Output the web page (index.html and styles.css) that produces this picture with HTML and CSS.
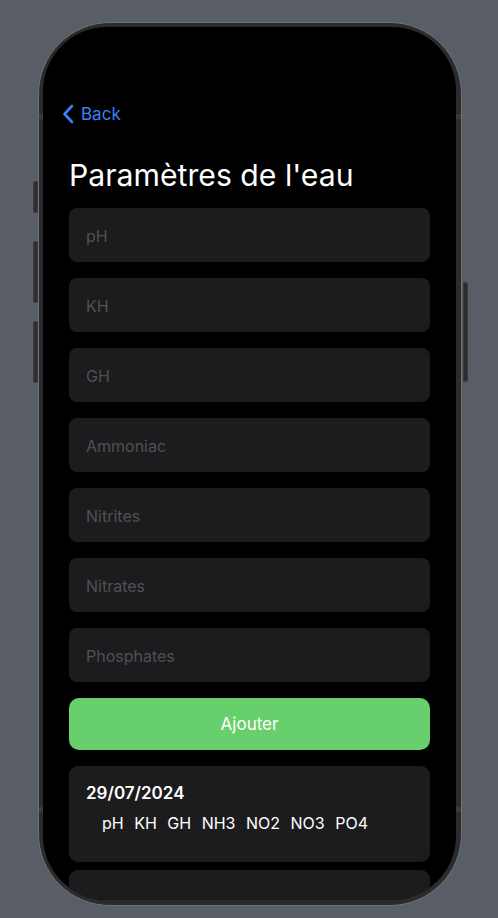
FILE: index.html
```html
<!DOCTYPE html>
<html lang="fr">
<head>
<meta charset="utf-8">
<title>Paramètres de l'eau</title>
<link rel="stylesheet" href="styles.css">
</head>
<body>
<div class="phone">
  <span class="btn btn-action"></span>
  <span class="btn btn-vol-up"></span>
  <span class="btn btn-vol-down"></span>
  <span class="btn btn-power"></span>
  <span class="band band-top-l"></span>
  <span class="band band-top-r"></span>
  <span class="band band-bot-l"></span>
  <span class="band band-bot-r"></span>
  <div class="screen">
    <nav class="nav">
      <a class="back" href="#">
        <svg class="chev" width="12" height="20" viewBox="0 0 12 20"><path d="M10 2 L2.5 10 L10 18" fill="none" stroke="currentColor" stroke-width="2.6" stroke-linecap="round" stroke-linejoin="round"/></svg>
        <span>Back</span>
      </a>
    </nav>
    <h1 class="title">Paramètres de l'eau</h1>
    <form class="form">
      <div class="field">pH</div>
      <div class="field">KH</div>
      <div class="field">GH</div>
      <div class="field">Ammoniac</div>
      <div class="field">Nitrites</div>
      <div class="field">Nitrates</div>
      <div class="field">Phosphates</div>
      <button class="add" type="button">Ajouter</button>
    </form>
    <div class="list">
      <div class="card">
        <div class="date">29/07/2024</div>
        <div class="params">
          <span>pH</span><span>KH</span><span>GH</span><span>NH3</span><span>NO2</span><span>NO3</span><span>PO4</span>
        </div>
      </div>
      <div class="card"></div>
    </div>
  </div>
</div>
</body>
</html>
```
FILE: styles.css
```css
* { box-sizing: border-box; }
html, body { margin: 0; padding: 0; }
body {
  background: #595d65;
  width: 498px;
  height: 918px;
  overflow: hidden;
  font-family: Inter, "Liberation Sans", sans-serif;
  padding: 22px 0 0 38px;
}
.phone {
  position: relative;
  width: 424px;
  height: 884px;
  border-radius: 72px;
  background: #2b2b2d;
  border: 1.5px solid #6f7175;
  padding: 4px 5px 5px 4px;
}
.btn {
  position: absolute;
  width: 5px;
  background: #2e2e30;
  border: 1px solid #3c3c3e;
}
.btn-action { left: -6.5px; top: 158px; height: 32px; border-radius: 2px 0 0 2px; }
.btn-vol-up { left: -6.5px; top: 218px; height: 62px; border-radius: 2px 0 0 2px; }
.btn-vol-down { left: -6.5px; top: 298px; height: 62px; border-radius: 2px 0 0 2px; }
.btn-power { right: -6.5px; top: 259px; height: 100px; border-radius: 0 2px 2px 0; }
.band {
  position: absolute;
  width: 6px;
  height: 5px;
  background: #3a3a3c;
}
.band-top-l { left: 0; top: 91px; }
.band-top-r { right: 0; top: 91px; }
.band-bot-l { left: 0; top: 784px; }
.band-bot-r { right: 0; top: 784px; }
.screen {
  position: relative;
  width: 100%;
  height: 100%;
  background: #000;
  border-radius: 64px;
  overflow: hidden;
  padding: 76px 26px 0 26px;
}
.nav { height: 22px; display: flex; align-items: center; margin-left: -7px; }
.back {
  display: flex;
  align-items: center;
  gap: 7px;
  color: #3a82f7;
  text-decoration: none;
  font-size: 17px;
  line-height: 22px;
}
.chev { display: block; }
.title {
  margin: 0;
  padding: 30px 0 0;
  font-size: 30.2px;
  line-height: 40px;
  font-weight: 400;
  color: #fff;
  letter-spacing: 0;
}
.form {
  margin-top: 13px;
  display: flex;
  flex-direction: column;
  gap: 16px;
}
.field {
  height: 54px;
  border-radius: 8px;
  background: #1c1c1e;
  color: #505054;
  font-size: 16px;
  display: flex;
  align-items: center;
  padding: 2px 0 0 17px;
}
.add {
  height: 52px;
  border: none;
  border-radius: 10px;
  background: #67cf6b;
  color: #fff;
  font-family: inherit;
  font-size: 17px;
}
.list {
  margin-top: 16px;
  display: flex;
  flex-direction: column;
  gap: 8px;
}
.card {
  height: 96px;
  border-radius: 9px;
  background: #1c1c1e;
  padding: 16px 17px;
}
.date {
  color: #fff;
  font-size: 17px;
  font-weight: 600;
  line-height: 22px;
}
.params {
  margin-top: 9px;
  padding-left: 16px;
  display: flex;
  gap: 10.5px;
  color: #fff;
  font-size: 16px;
  line-height: 20px;
}
```
